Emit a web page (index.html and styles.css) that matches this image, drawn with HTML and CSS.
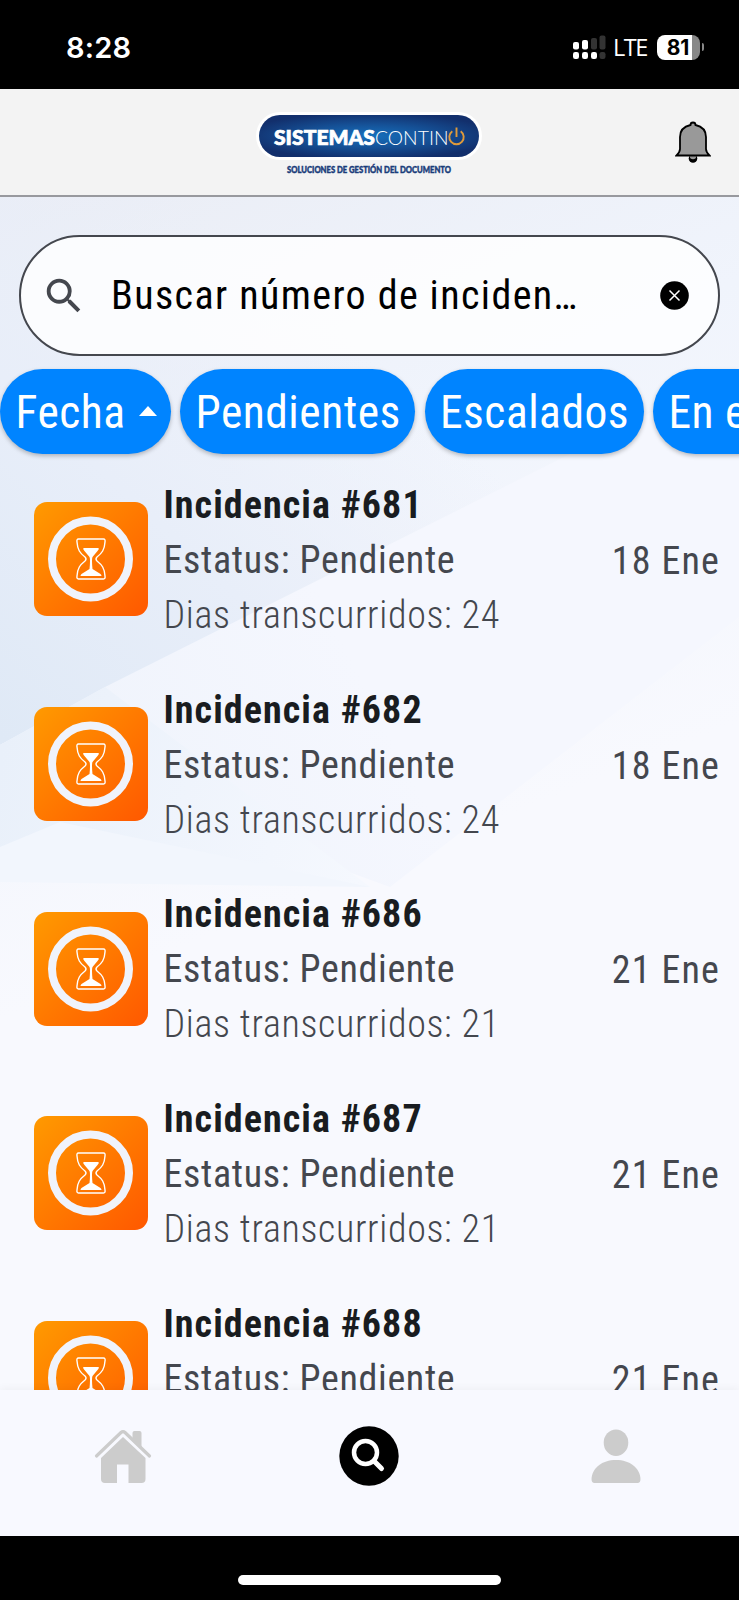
FILE: index.html
```html
<!DOCTYPE html>
<html lang="es">
<head>
<meta charset="utf-8">
<title>Incidencias</title>
<link rel="stylesheet" href="styles.css">
</head>
<body>
<div class="phone">
  <div class="statusbar">
    <span class="clock">8:28</span>
    <div class="status-right">
      <svg class="signal" width="33" height="25" viewBox="0 0 33 25" fill="#fff">
        <rect x="0" y="7" width="6" height="7.500" rx="2"/><rect x="9" y="5" width="6" height="9.500" rx="2"/>
        <rect x="18" y="3" width="6" height="11.500" rx="2" fill="#333"/><rect x="26.500" y="0.500" width="6" height="14" rx="2" fill="#333"/>
        <rect x="0" y="17" width="6" height="7" rx="2.200"/><rect x="9" y="17" width="6" height="7" rx="2.200"/><rect x="18" y="17" width="6" height="7" rx="2.200"/><rect x="26.500" y="17" width="6" height="7" rx="2.200" fill="#333"/>
      </svg>
      <span class="lte">LTE</span>
      <span class="battery">81</span><span class="battery-tip"></span>
    </div>
  </div>
  <header class="header">
    <svg class="logo" width="232" height="76" viewBox="0 0 232 76">
      <defs><radialGradient id="pill" gradientTransform="translate(.5 .5) scale(1.15 1.1) translate(-.5 -.5)"><stop offset="0" stop-color="#1670bd"/><stop offset=".5" stop-color="#155197"/><stop offset="1" stop-color="#122f6c"/></radialGradient></defs>
      <rect x="3" y="2" width="226" height="48" rx="24" fill="#fff"/>
      <rect x="6" y="5" width="220" height="42" rx="21" fill="url(#pill)"/>
      <text class="logo-bold" x="21" y="34.500" textLength="101" lengthAdjust="spacingAndGlyphs">SISTEMAS</text>
      <text class="logo-light" x="122" y="34.500" textLength="73.500" lengthAdjust="spacingAndGlyphs">CONTIN</text>
      <path d="M199.300 21.200a7.200 7.200 0 1 0 8.400 0M203.500 17.500v9.500" fill="none" stroke="#e09a3a" stroke-width="1.900"/>
      <text class="logo-tag" x="34" y="62.500" textLength="164" lengthAdjust="spacingAndGlyphs">SOLUCIONES DE GESTIÓN DEL DOCUMENTO</text>
    </svg>
    <svg class="bell" width="36" height="44" viewBox="0 0 36 44">
      <circle cx="18" cy="38.500" r="4.300" fill="#000"/><circle cx="18" cy="36" r="3.200" fill="#999"/>
      <path d="M15.500 5a2.500 2.500 0 0 1 5 0c6.500 1.500 10.500 6 10.500 12v12c0 3 1 4 3.500 6.500H1.500C4 33 5 32 5 29V17C5 11 9 6.500 15.500 5z" fill="#999" stroke="#000" stroke-width="1.800"/>
    </svg>
  </header>
  <main class="content">
    <svg class="backdrop" width="739" height="1193" viewBox="0 0 739 1193">
      <defs>
        <linearGradient id="bg" x1="0" y1="0" x2=".25" y2="1"><stop offset="0" stop-color="#eaedf5"/><stop offset=".3" stop-color="#f0f4fc"/><stop offset=".65" stop-color="#f8f9fe"/></linearGradient>
        <linearGradient id="fa" gradientUnits="userSpaceOnUse" x1="0" y1="540" x2="360" y2="150"><stop offset="0" stop-color="#dfe9f6"/><stop offset=".5" stop-color="#e8eef9"/><stop offset="1" stop-color="#eaeef8" stop-opacity="0"/></linearGradient>
        <linearGradient id="fb" gradientUnits="userSpaceOnUse" x1="0" y1="560" x2="370" y2="640"><stop offset="0" stop-color="#e9f0fa"/><stop offset="1" stop-color="#f5f8fe"/></linearGradient>
        <linearGradient id="fc" gradientUnits="userSpaceOnUse" x1="100" y1="540" x2="560" y2="300"><stop offset="0" stop-color="#f0f4fc"/><stop offset=".5" stop-color="#f5f7fe"/></linearGradient>
      </defs>
      <rect width="739" height="1193" fill="url(#bg)"/>
      <path d="M0 0H739L560 262L0 548z" fill="url(#fa)"/>
      <path d="M0 548L105 490L560 262L739 170V420L390 690z" fill="url(#fc)"/>
      <path d="M0 548L105 490L370 690L0 650z" fill="url(#fb)"/>
      <path d="M0 650L60 625L370 690L0 685z" fill="#f2f6fd"/>
    </svg>
    <div class="search">
      <svg class="search-glyph" width="46" height="46" viewBox="0 0 24 24" fill="#44474e"><path d="M15.500 14h-.79l-.28-.27A6.470 6.470 0 0 0 16 9.500 6.500 6.500 0 1 0 9.500 16c1.610 0 3.090-.59 4.230-1.570l.27.28v.79l5 4.990L20.490 19zm-6 0C7.010 14 5 11.990 5 9.500S7.010 5 9.500 5 14 7.010 14 9.500 11.990 14 9.500 14"/></svg>
      <span class="search-text">Buscar número de inciden…</span>
      <svg class="clear" width="29" height="29" viewBox="0 0 29 29"><circle cx="14.500" cy="14.500" r="14.300"/><path d="M9.500 9.500l10 10m0-10l-10 10" stroke="#fff" stroke-width="1.500"/></svg>
    </div>
    <div class="chips">
      <div class="chip chip-date">Fecha<span class="caret"></span></div>
      <div class="chip chip-pending">Pendientes</div>
      <div class="chip chip-scaled">Escalados</div>
      <div class="chip chip-wait">En espera</div>
    </div>
    <div class="list" id="list"></div>
  </main>
  <nav class="nav">
    <svg width="60" height="60" viewBox="0 0 60 60" fill="#ccc"><path d="M8 32L30 11L52.500 32V53a4 4 0 0 1-4 4H35.500V38.500H24V57H12a4 4 0 0 1-4-4z"/><path d="M39.500 7q0-2 2-2h5q2 0 2 2v17l-9-9z"/><path d="M3.500 30L28 6.500q2-2 4 0L56.500 30" fill="none" stroke="#ccc" stroke-width="3.200" stroke-linecap="round"/></svg>
    <svg width="60" height="60" viewBox="0 0 60 60"><circle cx="30" cy="30" r="29.700"/><circle cx="26.500" cy="26.500" r="11.500" fill="none" stroke="#fff" stroke-width="4.500"/><path d="M35 35l7.500 7.500" stroke="#fff" stroke-width="5" stroke-linecap="round"/></svg>
    <svg width="60" height="60" viewBox="0 0 60 60" fill="#ccc"><ellipse cx="30" cy="16.700" rx="12.300" ry="13.300"/><path d="M5.500 53C6 42 16 34 30 34s24 8 24.500 19q0 4-3 4h-43q-3 0-3-4z"/></svg>
  </nav>
  <div class="homebar"><span class="indicator"></span></div>
</div>
<script src="app.js"></script>
</body>
</html>
```
FILE: styles.css
```css
* { box-sizing: border-box; }
body { margin: 0; background: #000; }
.phone { width: 739px; height: 1600px; display: flex; flex-direction: column; overflow: hidden; font-family: "Roboto Condensed", Roboto, sans-serif; font-stretch: 75%; letter-spacing: 1px; }
.statusbar { height: 89px; flex: none; background: #000; color: #fff; display: flex; justify-content: space-between; align-items: flex-start; padding: 33px 35px 0 66px; font-family: Inter, sans-serif; font-stretch: normal; }
.clock { font-size: 29px; font-weight: 600; line-height: 30px; letter-spacing: 0.2px; }
.status-right { display: flex; align-items: center; height: 28px; }
.lte { font-family: "Open Sans", sans-serif; font-size: 23.5px; line-height: 28px; font-weight: 500; letter-spacing: -1.4px; margin: 0 9.5px 0 7px; }
.battery { width: 43px; height: 25px; border-radius: 8px; background: linear-gradient(90deg, #fff 0 35px, #888 35px); color: #000; font-size: 21px; font-weight: 700; line-height: 25px; text-align: center; letter-spacing: 0; }
.battery-tip { width: 2.5px; height: 8px; margin-left: 2px; border-radius: 0 3px 3px 0; background: #888; }
.header { height: 108px; flex: none; background: #f3f3f3; border-bottom: 2px solid #98999e; display: flex; justify-content: flex-end; align-items: flex-start; padding: 21px 28px 0 0; }
.logo { margin: 0 190px 0 0; }
.logo-bold { font: 900 20.5px Lato, sans-serif; fill: #fff; stroke: #fff; stroke-width: .7px; letter-spacing: 0; }
.logo-light { font: 300 20.5px Lato, sans-serif; fill: #fff; letter-spacing: 0; }
.logo-tag { font: 900 8.5px Lato, sans-serif; fill: #193c7a; stroke: #193c7a; stroke-width: .4px; letter-spacing: 0; }
.bell { margin-top: 10px; }
.content { height: 1193px; flex: none; position: relative; z-index: 0; overflow: hidden; background: #f8f9fe; }
.backdrop { position: absolute; left: 0; top: 0; z-index: -1; }
.search { height: 121px; margin: 38px 19px 0; border: 2px solid #44474e; border-radius: 60.5px; background: rgba(255,255,255,.8); display: flex; align-items: center; padding: 0 29px 0 20px; }
.search-text { flex: 1; margin-left: 24px; font-size: 40px; white-space: nowrap; color: #000; letter-spacing: 1.4px; }
.chips { display: flex; gap: 9.5px; margin-top: 13px; }
.chip { flex: none; height: 85px; border-radius: 43px; background: #0084ff; color: #fff; font-size: 45.5px; line-height: 86px; padding: 2px 0 0 15.5px; white-space: nowrap; box-shadow: 0 2px 4px rgba(0,0,0,.25); letter-spacing: .5px; display: flex; align-items: center; }
.chip-date { width: 170.5px; }
.chip-pending { width: 235px; }
.chip-scaled { width: 219px; }
.chip-wait { width: 220px; }
.caret { margin-left: 13px; border: 9.5px solid transparent; border-top: 0; border-bottom: 10px solid #fff; margin-bottom: 4px; }
.list { margin-top: 3px; }
.item { height: 204.7px; display: flex; align-items: center; padding: 0 19px 0 34px; font-size: 38px; color: #44474e; }
.badge { flex: none; }
.lines { flex: 1; margin: 2px 0 0 15.5px; line-height: 55px; white-space: nowrap; letter-spacing: .65px; }
.title { font-weight: 700; color: #191c20; letter-spacing: 1.07px; }
.days { font-weight: 300; }
.date { line-height: 55px; margin-top: 4px; letter-spacing: 1.15px; }
.nav { height: 146px; flex: none; position: relative; background: #f8f9ff; display: grid; grid-template-columns: repeat(3, 1fr); justify-items: center; padding-top: 36px; box-shadow: 0 -2px 8px rgba(0,0,0,.04); }
.homebar { flex: 1; background: #000; display: flex; justify-content: center; align-items: flex-start; padding-top: 39px; }
.indicator { width: 263px; height: 10px; border-radius: 5px; background: #fff; }
```
FILE: app.js
```js
const rows = [[681, 24, "18 Ene"], [682, 24, "18 Ene"], [686, 21, "21 Ene"], [687, 21, "21 Ene"], [688, 21, "21 Ene"]];
const badge = `<svg class="badge" width="114" height="114" viewBox="0 0 114 114">
<defs><linearGradient id="orange" x1="0" y1="0" x2="1" y2="1"><stop offset="0" stop-color="#ff9a00"/><stop offset="1" stop-color="#ff5800"/></linearGradient></defs>
<rect width="114" height="114" rx="13" fill="url(#orange)"/>
<circle cx="56.500" cy="57" r="38.500" fill="none" stroke="#f0f3fb" stroke-width="8"/>
<path d="M44.500 37h25q2 0 1.500 3c-.5 8-3 11-8 15q-2 2 0 4c5 4 7.500 7 8 15q.5 3-1.500 3h-25q-2 0-1.500-3c.5-8 3-11 8-15q2-2 0-4c-5-4-7.500-7-8-15q-.5-3 1.500-3z" fill="none" stroke="#fff" stroke-width="1.400"/>
<path d="M49.500 46h15q1 1-1 3l-5 6q-1 2 0 12l8 5q2 2 0 2H47.500q-2 0 0-2l8-5q1-10 0-12l-5-6q-2-2-1-3z" fill="#fff"/></svg>`;
document.getElementById("list").innerHTML = rows.map(([id, days, date]) => `<div class="item">${badge}
<div class="lines"><div class="title">Incidencia #${id}</div><div>Estatus: Pendiente</div><div class="days">Dias transcurridos: ${days}</div></div>
<div class="date">${date}</div></div>`).join("");
```
